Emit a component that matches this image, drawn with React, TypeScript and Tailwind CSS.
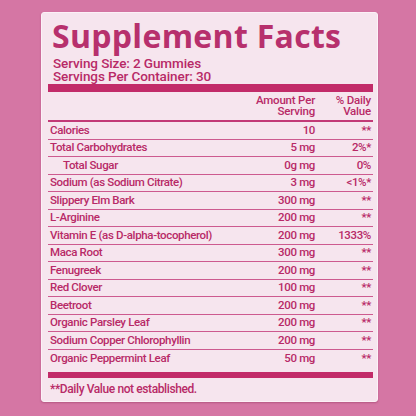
import React from "react";

const rows: { name: string; amt: string; dv: string; indent?: boolean }[] = [
  { name: "Calories", amt: "10", dv: "**" },
  { name: "Total Carbohydrates", amt: "5 mg", dv: "2%*" },
  { name: "Total Sugar", amt: "0g mg", dv: "0%", indent: true },
  { name: "Sodium (as Sodium Citrate)", amt: "3 mg", dv: "<1%*" },
  { name: "Slippery Elm Bark", amt: "300 mg", dv: "**" },
  { name: "L-Arginine", amt: "200 mg", dv: "**" },
  { name: "Vitamin E (as D-alpha-tocopherol)", amt: "200 mg", dv: "1333%" },
  { name: "Maca Root", amt: "300 mg", dv: "**" },
  { name: "Fenugreek", amt: "200 mg", dv: "**" },
  { name: "Red Clover", amt: "100 mg", dv: "**" },
  { name: "Beetroot", amt: "200 mg", dv: "**" },
  { name: "Organic Parsley Leaf", amt: "200 mg", dv: "**" },
  { name: "Sodium Copper Chlorophyllin", amt: "200 mg", dv: "**" },
  { name: "Organic Peppermint Leaf", amt: "50 mg", dv: "**" },
];

export default function App() {
  return (
    <div className="w-[416px] h-[416px] bg-[#d576a4] pt-[12px] pl-[41px] [font-family:Roboto,'Liberation_Sans',sans-serif] text-[#b82a67]">
      <div className="w-[337px] h-[390px] bg-[#f6e5ee] border border-[#fcf1f7] rounded-[3px] shadow-[0_1px_2px_rgba(120,30,70,0.35)] pl-[6px] pr-[4px] flex flex-col">
        <div className="pl-[4px] pt-[3px] text-[32px] leading-[40px] font-bold tracking-[0.3px] text-[#b7306d] [font-family:'Open_Sans',sans-serif]">
          Supplement Facts
        </div>
        <div className="pl-[5px] mt-[1px] text-[13.5px] leading-[13px] font-medium tracking-[-0.1px]">
          <div>Serving Size: 2 Gummies</div>
          <div>Servings Per Container: 30</div>
        </div>
        <div className="mt-[1px] h-[8px] bg-[#c22b69]" />
        <div className="grid grid-cols-[1fr_70px_58px] text-[11.5px] leading-[11px] font-medium tracking-[-0.2px] pt-[3px] pb-[3px] border-b-2 border-[#c23a77]">
          <div />
          <div className="text-right">
            <div>Amount Per</div>
            <div>Serving</div>
          </div>
          <div className="text-right pr-[2px]">
            <div>% Daily</div>
            <div>Value</div>
          </div>
        </div>
        {rows.map((r, i) => (
          <div
            key={r.name}
            className={`grid grid-cols-[1fr_70px_58px] items-center h-[17.5px] text-[11.5px] leading-none font-medium tracking-[-0.35px] ${
              i < rows.length - 1 ? "border-b border-[#cd5a8f]" : ""
            }`}
          >
            <div className={r.indent ? "pl-[15px]" : "pl-[2px]"}>{r.name}</div>
            <div className="text-right">{r.amt}</div>
            <div className="text-right pr-[2px]">{r.dv}</div>
          </div>
        ))}
        <div className="mt-[5px] h-[6px] bg-[#c22b69]" />
        <div className="pl-[2px] mt-[5px] text-[12px] leading-none font-medium tracking-[-0.4px]">
          **Daily Value not established.
        </div>
      </div>
    </div>
  );
}
